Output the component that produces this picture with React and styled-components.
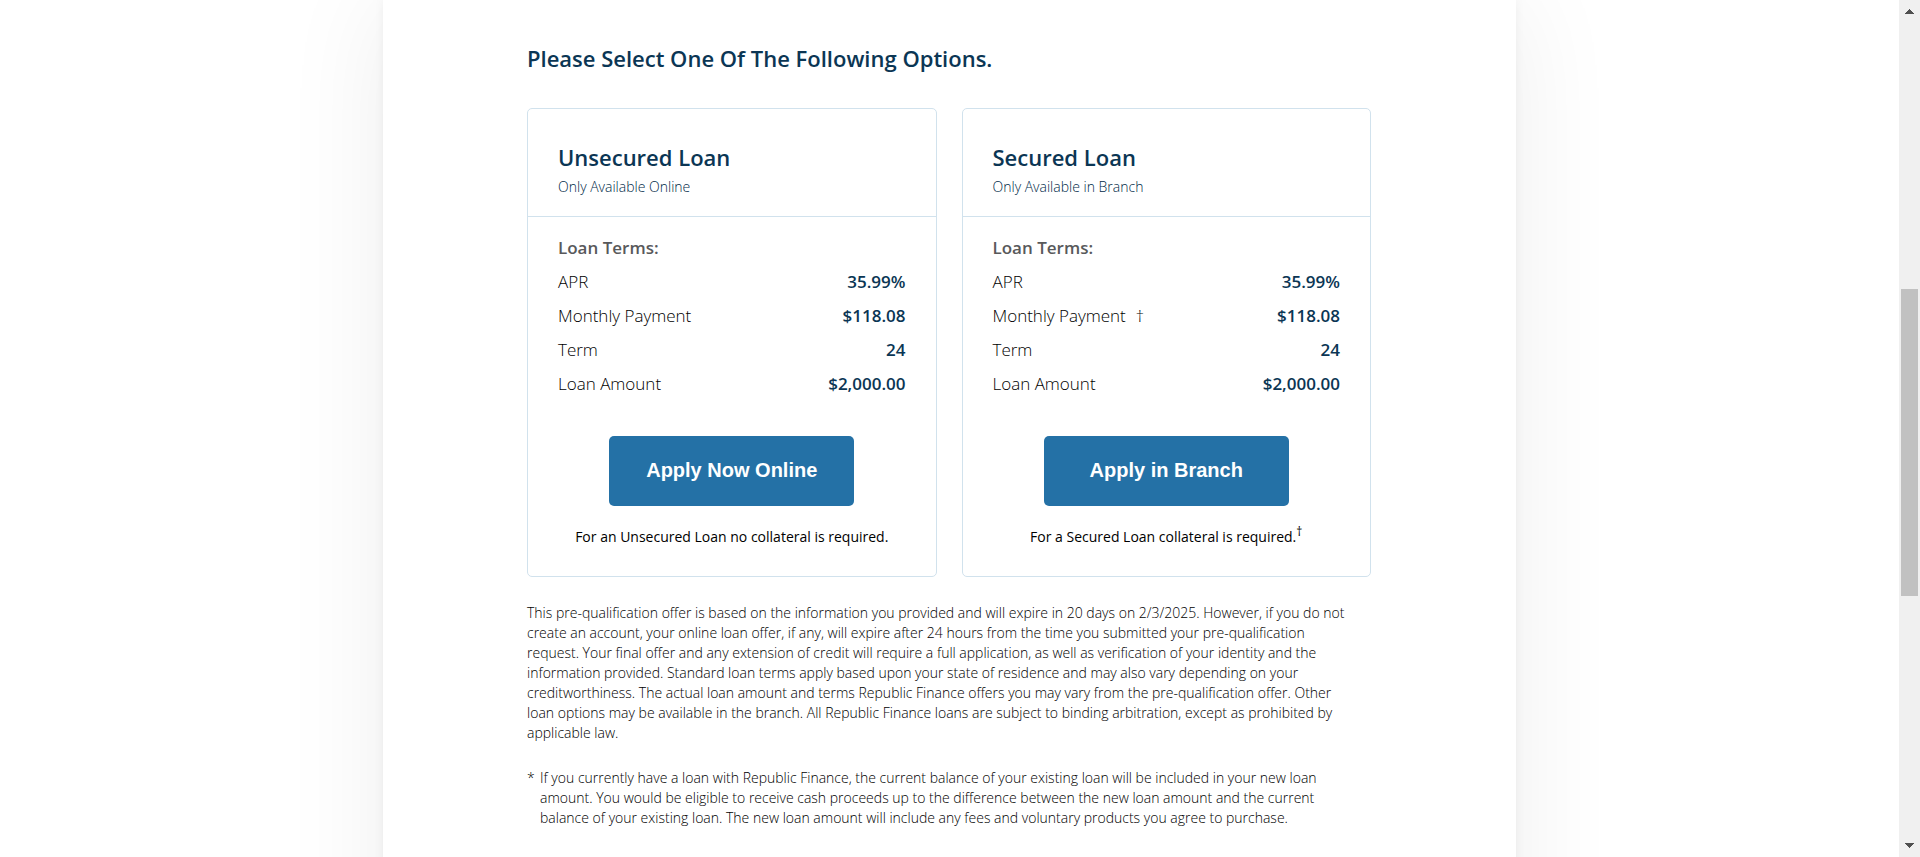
import React from "react";
import styled, { createGlobalStyle } from "styled-components";

const GlobalStyle = createGlobalStyle`
  * { box-sizing: border-box; }
  html, body { margin: 0; background: #fff; }
  body {
    font-family: "Open Sans", sans-serif;
    font-size: 14px;
    line-height: 20px;
    font-weight: 300;
    color: #000;
  }
`;

const Shell = styled.div`
  display: flex;
  height: 100vh;
  overflow: hidden;
`;

const Viewport = styled.div`
  flex: 1;
  display: flex;
  justify-content: center;
  align-items: flex-start;
  overflow: hidden;
`;

const Panel = styled.main`
  width: 100%;
  max-width: 1133px;
  min-height: 120vh;
  padding: 43px 145px 0 144px;
  background: #fff;
  box-shadow: 0 0 100px rgba(0, 0, 0, 0.07), 0 0 10px rgba(0, 0, 0, 0.05);
`;

const Title = styled.h1`
  margin: 0 0 35px;
  font-size: 22px;
  line-height: 30px;
  font-weight: 600;
  color: #0b3654;
`;

const Cards = styled.div`
  display: grid;
  grid-template-columns: 1fr 1fr;
  gap: 25px;
  margin-bottom: 26px;
`;

const Card = styled.section`
  border: 1px solid #d1e2ed;
  border-radius: 5px;
`;

const CardHeader = styled.header`
  padding: 33px 30px 19px;
  border-bottom: 1px solid #d1e2ed;
  color: #0b3654;
`;

const CardTitle = styled.h2`
  margin: 0 0 5px;
  font-size: 22px;
  line-height: 30px;
  font-weight: 600;
`;

const CardNote = styled.p`
  margin: 0;
  color: #002a48;
`;

const CardBody = styled.div`
  display: flex;
  flex-direction: column;
  align-items: center;
  padding: 14px 30px 29px;
`;

const Terms = styled.table`
  width: 100%;
  margin-bottom: 35px;
  border-collapse: collapse;
  font-size: 17px;
  line-height: 34px;

  caption { text-align: left; font-weight: 600; color: #58595b; }
  th, td { padding: 0; }
  th { text-align: left; font-weight: 300; }
  td { text-align: right; font-weight: 600; color: #0b3654; }
`;

const Mark = styled.span`
  margin-left: 10px;
`;

const ApplyButton = styled.button`
  width: 245px;
  height: 70px;
  margin-bottom: 21px;
  padding: 0 0 2px;
  border: 0;
  border-radius: 5px;
  background: #2471a6;
  color: #fff;
  font: 700 20px "Liberation Sans", Arial, sans-serif;
`;

const Collateral = styled.p`
  margin: 0;
  font-weight: 400;

  sup { font-size: 12px; line-height: 0; }
`;

const Disclosure = styled.p`
  margin: 0 0 25px;
  padding-right: 16px;
`;

const Footnote = styled.div`
  display: flex;
  margin-bottom: 25px;
  padding-right: 16px;

  p { margin: 0; }
`;

const FootnoteMark = styled.span`
  flex: 0 0 13px;
`;

const Scrollbar = styled.div`
  flex: 0 0 21px;
  display: flex;
  flex-direction: column;
  align-items: center;
  padding: 9px 0;
  background: #f0f0f0;
`;

const Track = styled.div`
  flex: 1;
  display: flex;
  flex-direction: column;
  width: 17px;
`;

const Before = styled.div`
  flex: 275;
`;

const Thumb = styled.div`
  flex: 307;
  background: #c1c1c1;
`;

const After = styled.div`
  flex: 247;
`;

const Arrow = ({ d }) => (
  <svg width="9" height="5" viewBox="0 0 9 5" fill="#505050" shapeRendering="crispEdges" aria-hidden="true">
    <path d={d} />
  </svg>
);

const loans = [
  {
    name: "Unsecured Loan",
    note: "Only Available Online",
    action: "Apply Now Online",
    collateral: "For an Unsecured Loan no collateral is required.",
    secured: false,
  },
  {
    name: "Secured Loan",
    note: "Only Available in Branch",
    action: "Apply in Branch",
    collateral: "For a Secured Loan collateral is required.",
    secured: true,
  },
];

const LoanCard = ({ name, note, action, collateral, secured }) => (
  <Card>
    <CardHeader>
      <CardTitle>{name}</CardTitle>
      <CardNote>{note}</CardNote>
    </CardHeader>
    <CardBody>
      <Terms>
        <caption>Loan Terms:</caption>
        <tbody>
          <tr><th scope="row">APR</th><td>35.99%</td></tr>
          <tr><th scope="row">Monthly Payment{secured && <Mark>†</Mark>}</th><td>$118.08</td></tr>
          <tr><th scope="row">Term</th><td>24</td></tr>
          <tr><th scope="row">Loan Amount</th><td>$2,000.00</td></tr>
        </tbody>
      </Terms>
      <ApplyButton type="button">{action}</ApplyButton>
      <Collateral>{collateral}{secured && <sup>†</sup>}</Collateral>
    </CardBody>
  </Card>
);

export default function App() {
  return (
    <Shell>
      <GlobalStyle />
      <Viewport>
        <Panel>
          <Title>Please Select One Of The Following Options.</Title>
          <Cards>
            {loans.map((loan) => <LoanCard key={loan.name} {...loan} />)}
          </Cards>
          <Disclosure>
            This pre-qualification offer is based on the information you provided and will expire in 20 days on
            2/3/2025. However, if you do not create an account, your online loan offer, if any, will expire after 24
            hours from the time you submitted your pre-qualification request. Your final offer and any extension of
            credit will require a full application, as well as verification of your identity and the information
            provided. Standard loan terms apply based upon your state of residence and may also vary depending on your
            creditworthiness. The actual loan amount and terms Republic Finance offers you may vary from the
            pre-qualification offer. Other loan options may be available in the branch. All Republic Finance loans are
            subject to binding arbitration, except as prohibited by applicable law.
          </Disclosure>
          <Footnote>
            <FootnoteMark>*</FootnoteMark>
            <p>
              If you currently have a loan with Republic Finance, the current balance of your existing loan will be
              included in your new loan amount. You would be eligible to receive cash proceeds up to the difference
              between the new loan amount and the current balance of your existing loan. The new loan amount will
              include any fees and voluntary products you agree to purchase.
            </p>
          </Footnote>
          <Footnote>
            <FootnoteMark>†</FootnoteMark>
            <p>Monthly payment amount on a secured loan will be based on the collateral you provide in the branch.</p>
          </Footnote>
        </Panel>
      </Viewport>
      <Scrollbar aria-hidden="true">
        <Arrow d="M4 0h1v1h1v1h1v1h1v1h1v1H0V4h1V3h1V2h1V1h1z" />
        <Track><Before /><Thumb /><After /></Track>
        <Arrow d="M0 0h9v1H8v1H7v1H6v1H5v1H4V4H3V3H2V2H1V1H0z" />
      </Scrollbar>
    </Shell>
  );
}
